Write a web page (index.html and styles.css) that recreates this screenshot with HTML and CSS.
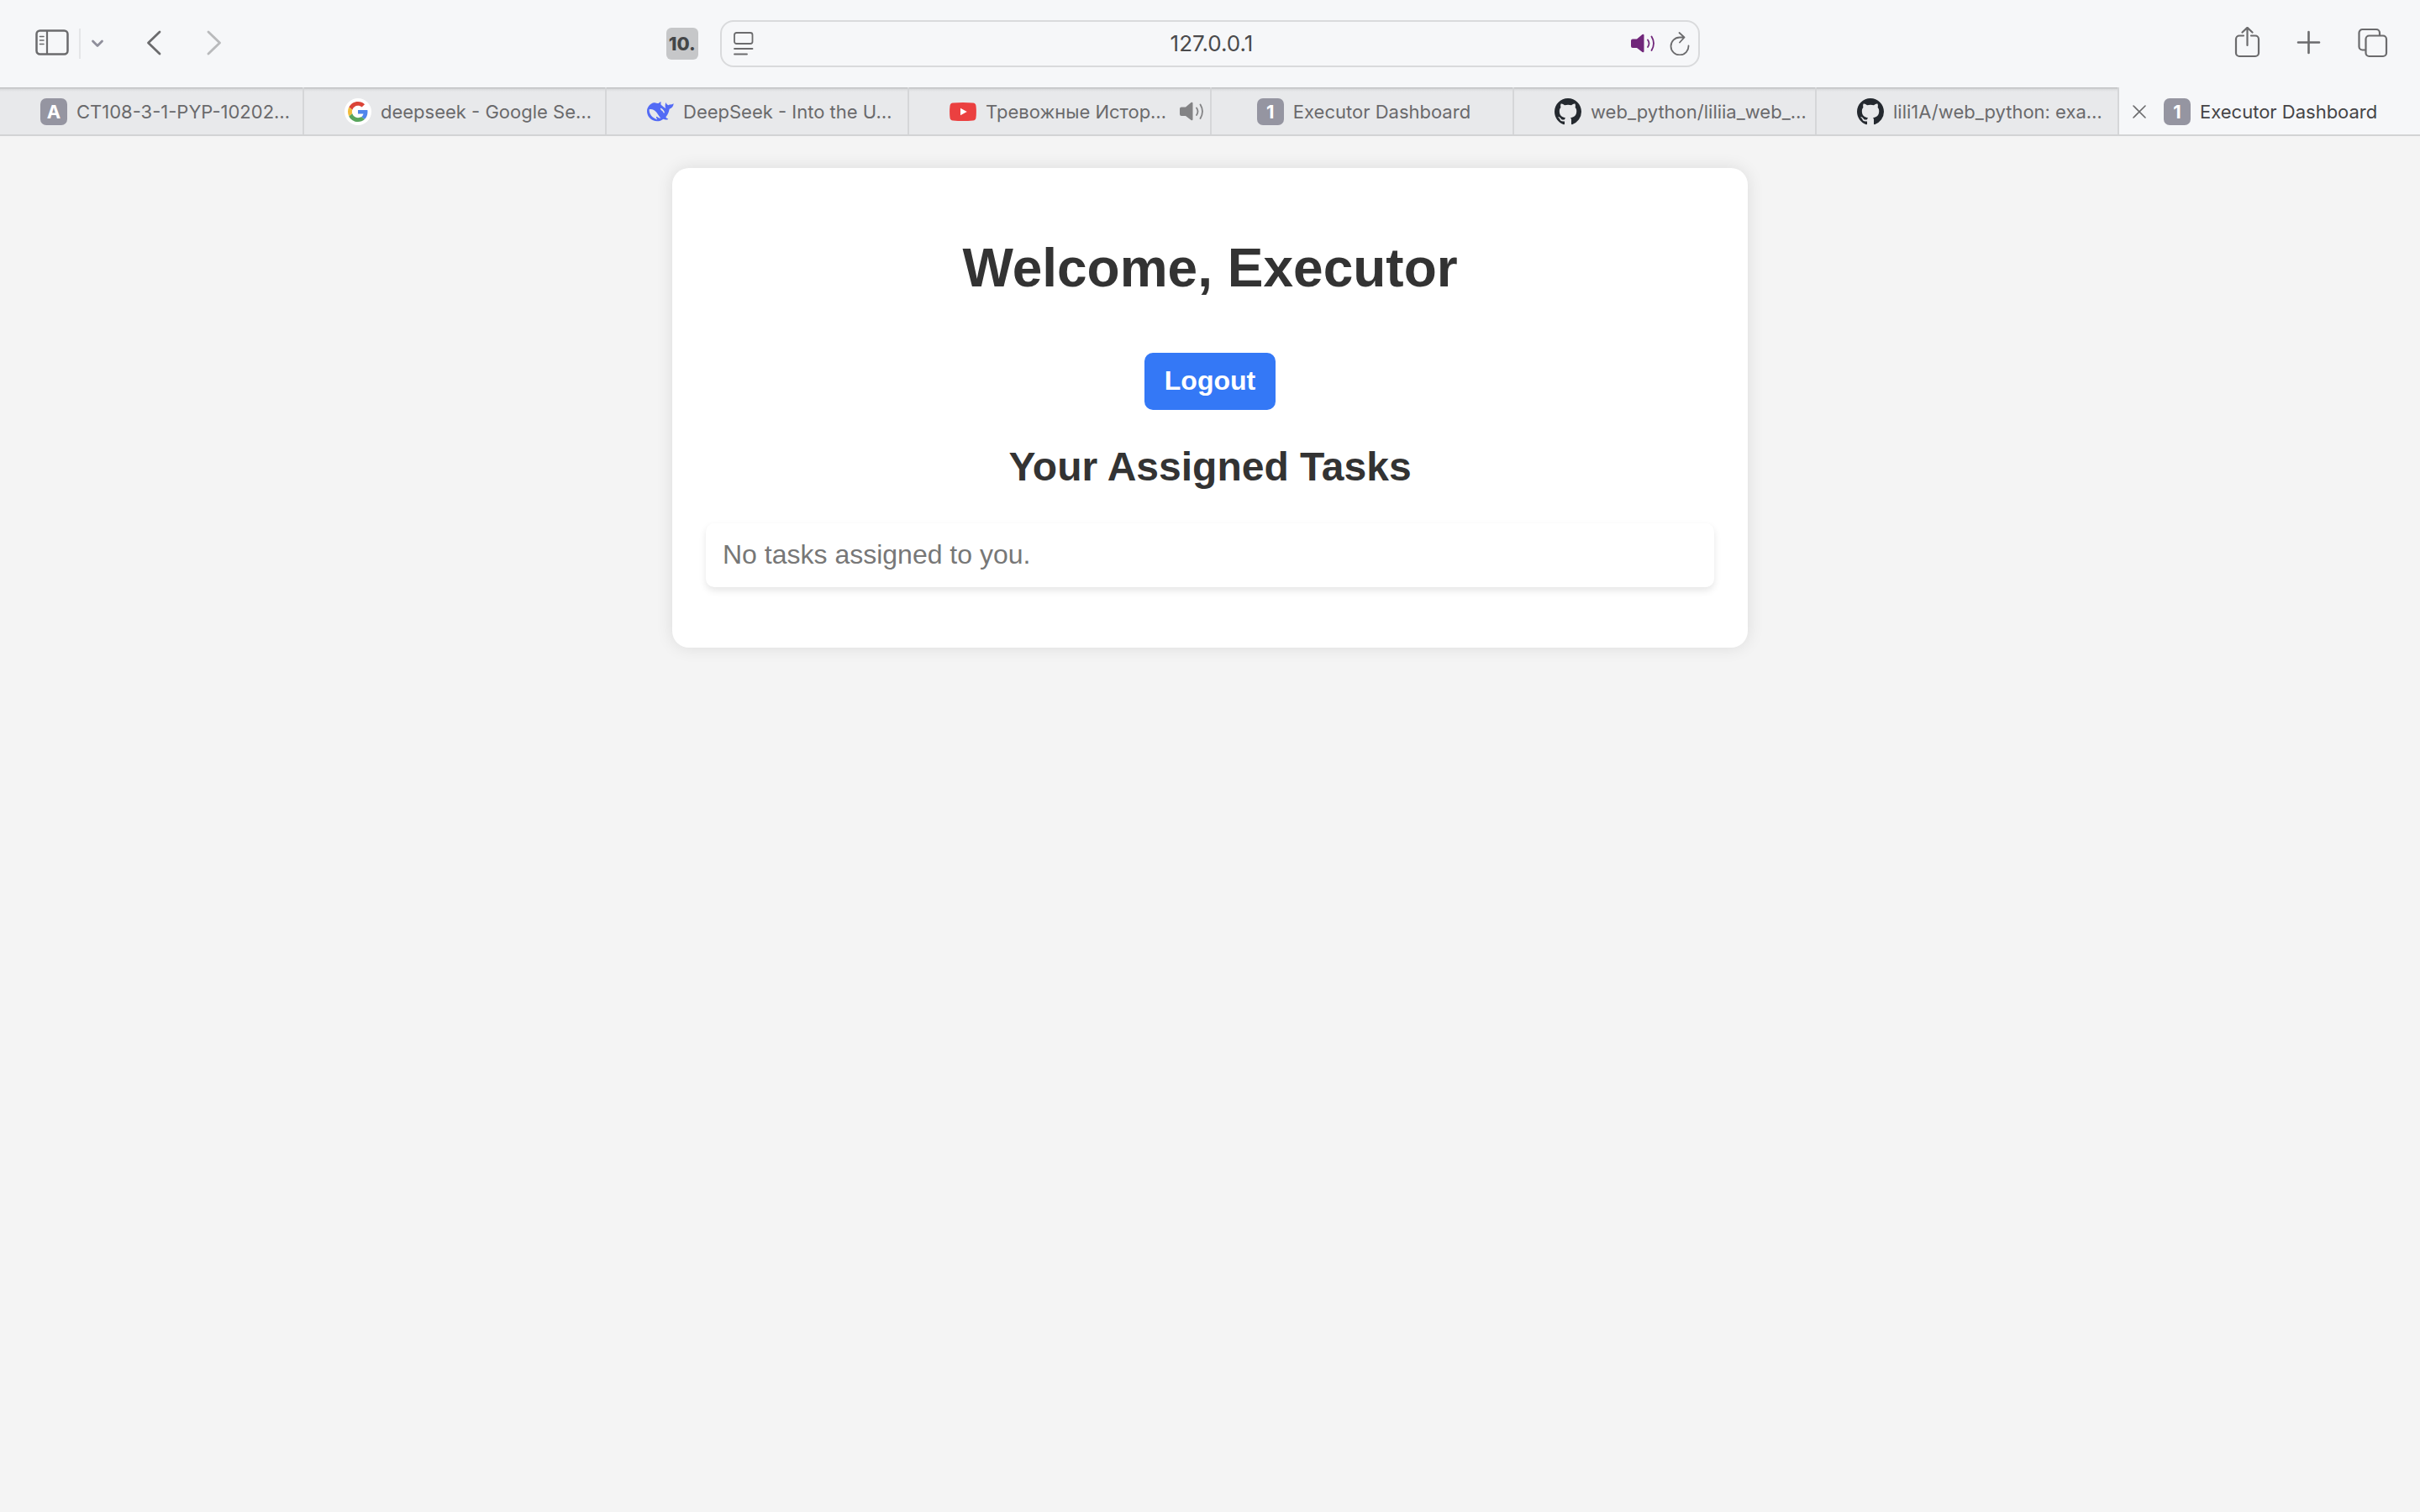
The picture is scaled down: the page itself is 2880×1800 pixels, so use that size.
FILE: index.html
```html
<!DOCTYPE html>
<html lang="en">
<head>
<meta charset="utf-8">
<meta name="viewport" content="width=device-width, initial-scale=1">
<title>Executor Dashboard</title>
<link rel="stylesheet" href="styles.css">
</head>
<body>
<svg class="defs" aria-hidden="true">
  <symbol id="speaker" viewBox="0 0 30 24">
    <path fill="currentColor" d="M2 6.500h5L13.500 1Q15.500 0 15.500 2V21Q15.500 23 13.500 22L7 17H2Q0 17 0 15V8.500Q0 6.500 2 6.500Z"/>
    <path fill="none" stroke="currentColor" stroke-width="1.800" stroke-linecap="round" d="M20 7.500q3 4 0 8.500M24.500 3.500q5 8 0 16.500"/>
  </symbol>
  <symbol id="github" viewBox="0 0 16 16">
    <path fill="#24292f" d="M8 0C3.580 0 0 3.580 0 8c0 3.540 2.290 6.530 5.470 7.590.4.070.55-.17.55-.38 0-.19-.01-.82-.01-1.490-2.010.37-2.530-.49-2.690-.94-.09-.23-.48-.94-.82-1.130-.28-.15-.68-.52-.01-.53.63-.01 1.080.58 1.230.82.72 1.210 1.870.87 2.330.66.07-.52.28-.87.51-1.070-1.780-.2-3.640-.89-3.640-3.950 0-.87.31-1.590.82-2.150-.08-.2-.36-1.020.08-2.120 0 0 .67-.21 2.200.82.64-.18 1.320-.27 2-.27s1.360.09 2 .27c1.530-1.040 2.200-.82 2.200-.82.44 1.100.16 1.920.08 2.120.51.56.82 1.270.82 2.150 0 3.070-1.870 3.750-3.650 3.950.29.25.54.73.54 1.480 0 1.070-.01 1.930-.01 2.200 0 .21.15.46.55.38A8.010 8.010 0 0 0 16 8c0-4.420-3.580-8-8-8Z"/>
  </symbol>
</svg>

<header class="toolbar">
  <div class="tools tools-left">
    <button class="tool" type="button" aria-label="Show sidebar">
      <svg width="40" height="40" viewBox="0 0 40 40"><rect x="1.500" y="4.500" width="37" height="28" rx="4" stroke-width="2.500"/><path stroke-width="2.200" d="M14 5v27"/><path stroke-width="1.600" d="M5.500 11.500h4.500M5.500 16h4.500M5.500 20.500h4.500"/></svg>
    </button>
    <span class="divider"></span>
    <button class="tool tool-muted" type="button" aria-label="Tab groups">
      <svg width="16" height="40" viewBox="0 0 16 40"><path stroke-width="2.800" d="M2.500 17 8 22.500 13.500 17"/></svg>
    </button>
    <nav class="history">
      <button class="tool tool-wide" type="button" aria-label="Back">
        <svg width="40" height="40" viewBox="0 0 40 40"><path stroke-width="2.800" d="M26 6 12.500 19 26 32"/></svg>
      </button>
      <button class="tool tool-wide tool-off" type="button" aria-label="Forward">
        <svg width="40" height="40" viewBox="0 0 40 40"><path stroke-width="2.800" d="M12 6 25.500 19 12 32"/></svg>
      </button>
    </nav>
    <button class="extension" type="button">10.</button>
  </div>
  <div class="address">
    <button class="tool" type="button" aria-label="Page menu">
      <svg width="24" height="28" viewBox="0 0 24 28"><rect x="1" y="1" width="21.500" height="13" rx="2.500" stroke-width="1.800"/><path stroke-width="1.800" d="M1 20h21.500M1 26.500h15"/></svg>
    </button>
    <input class="url" type="text" value="127.0.0.1" aria-label="Address">
    <button class="tool tool-sound" type="button" aria-label="Mute tab"><svg width="30" height="24"><use href="#speaker"/></svg></button>
    <button class="tool" type="button" aria-label="Reload">
      <svg width="24" height="28" viewBox="0 0 24 28"><path stroke-width="1.800" d="M22.500 16.500A10.500 10.500 0 1 1 12 6.500h5.500M11.500 1l6 5.500-5.500 6"/></svg>
    </button>
  </div>
  <div class="tools tools-right">
    <button class="tool tool-wide" type="button" aria-label="Share">
      <svg width="40" height="40" viewBox="0 0 40 40"><path stroke-width="2.200" d="M15 10.500H10a4 4 0 0 0-4 4V31a4 4 0 0 0 4 4H29a4 4 0 0 0 4-4V14.500a4 4 0 0 0-4-4H24M19.500 22V.9M13.500 6.500l6-5.600 6 5.600"/></svg>
    </button>
    <button class="tool tool-wide" type="button" aria-label="New tab">
      <svg width="40" height="40" viewBox="0 0 40 40"><path stroke-width="2.600" d="M6 18.500H31M18.500 6V31"/></svg>
    </button>
    <button class="tool tool-wide" type="button" aria-label="Tab overview">
      <svg width="40" height="40" viewBox="0 0 40 40"><rect x="12.500" y="10.500" width="24.500" height="24.500" rx="4" stroke-width="2.200"/><path stroke-width="2.200" d="M12 27.500H8.500a4 4 0 0 1-4-4V7a4 4 0 0 1 4-4H25a4 4 0 0 1 4 4v3"/></svg>
    </button>
  </div>
</header>

<nav class="tabs" aria-label="Tabs">
  <a class="tab" href="#"><span class="badge">A</span><span class="title">CT108-3-1-PYP-10202…</span></a>
  <a class="tab" href="#">
    <svg class="favicon" viewBox="-8 -8 64 64"><circle cx="24" cy="24" r="32" fill="#fff"/><path fill="#db4437" d="M24 9.500c3.540 0 6.710 1.220 9.210 3.600l6.850-6.850C35.900 2.380 30.470 0 24 0 14.620 0 6.510 5.380 2.560 13.220l7.980 6.190C12.430 13.720 17.740 9.500 24 9.500z"/><path fill="#4f86ec" d="M46.980 24.550c0-1.570-.15-3.090-.38-4.550H24v9.020h12.940c-.58 2.960-2.260 5.480-4.780 7.180l7.730 6c4.510-4.180 7.090-10.360 7.090-17.650z"/><path fill="#f1bb3a" d="M10.530 28.590A14.500 14.500 0 0 1 9.770 24c0-1.600.27-3.140.76-4.590l-7.980-6.190A23.900 23.900 0 0 0 0 24c0 3.880.92 7.540 2.560 10.780l7.970-6.190z"/><path fill="#58a55c" d="M24 48c6.480 0 11.930-2.130 15.890-5.810l-7.730-6c-2.150 1.450-4.920 2.300-8.160 2.300-6.260 0-11.570-4.220-13.470-9.910l-7.980 6.190C6.510 42.620 14.620 48 24 48z"/></svg>
    <span class="title">deepseek - Google Se…</span>
  </a>
  <a class="tab" href="#">
    <svg class="favicon" viewBox="0 0 96 96"><path fill="#536bf5" fill-rule="evenodd" d="M0 46C0 32 10 20 24 16C31 14 35 19 41 18C44 17 45 14 49 13C52 14 47 19 50 23C56 29 62 32 67 36C64 30 64 21 68 14C68 20 72 23 77 25C83 20 88 25 95 18C95 28 89 35 80 38C78 50 74 59 67 67C69 72 74 73 76 74C71 79 63 76 58 74C49 82 34 84 22 79C9 74 0 61 0 46ZM8 40C7 53 15 66 29 73C32 75 35 77 36 74C34 71 31 66 34 65C39 66 43 73 49 71C44 65 40 58 34 50C27 42 17 37 8 40ZM48 35C52 35 60 41 62 48C64 55 59 53 58 50C57 46 53 45 51 42C49 40 47 37 48 35Z"/></svg>
    <span class="title">DeepSeek - Into the U…</span>
  </a>
  <a class="tab" href="#">
    <svg class="favicon" viewBox="0 0 32 32"><path fill="#eb4040" d="M4 5.500Q16 4.500 28 5.500 31 5.800 31.500 9 32.300 16 31.500 23 31 26.200 28 26.500 16 27.500 4 26.500 1 26.200.5 23-.3 16 .5 9 1 5.800 4 5.500Z"/><path fill="#fff" d="M13 11.800v8.400L20.800 16Z"/></svg>
    <span class="title">Тревожные Истор…</span>
    <svg class="playing" width="30" height="24"><use href="#speaker"/></svg>
  </a>
  <a class="tab tab-centered" href="#"><span class="badge">1</span><span class="title">Executor Dashboard</span></a>
  <a class="tab" href="#"><svg class="favicon"><use href="#github"/></svg><span class="title">web_python/liliia_web_…</span></a>
  <a class="tab" href="#"><svg class="favicon"><use href="#github"/></svg><span class="title">lili1A/web_python: exa…</span></a>
  <div class="tab tab-active">
    <button class="tool" type="button" aria-label="Close tab"><svg width="16" height="16" viewBox="0 0 16 16"><path stroke-width="1.600" d="M1 1 15 15M15 1 1 15"/></svg></button>
    <a class="tab-link" href="#"><span class="badge">1</span><span class="title">Executor Dashboard</span></a>
  </div>
</nav>

<main class="card">
  <h1>Welcome, Executor</h1>
  <button class="logout" type="button">Logout</button>
  <h2>Your Assigned Tasks</h2>
  <ul class="tasks">
    <li>No tasks assigned to you.</li>
  </ul>
</main>
</body>
</html>
```
FILE: styles.css
```css
* {
  box-sizing: border-box;
}

body {
  margin: 0;
  min-height: 100vh;
  background: #f4f4f4;
  font-family: "Liberation Sans", Arial, sans-serif;
}

button {
  padding: 0;
  border: 0;
  background: none;
}

svg {
  display: block;
  flex: none;
}

.defs {
  display: none;
}

/* Browser toolbar */
.toolbar {
  display: grid;
  grid-template-columns: 1fr 40.5% 1fr;
  align-items: center;
  height: 104px;
  background: #f6f7f9;
  font-family: Inter, sans-serif;
}

.tools {
  display: flex;
  align-items: center;
}

.tools-left {
  gap: 12px;
  padding: 0 26px 0 42px;
}

.tools-right {
  justify-content: flex-end;
  padding-right: 20px;
}

.tool {
  display: flex;
  justify-content: center;
  flex: none;
  color: #6b6b6d;
}

.tool svg {
  fill: none;
  stroke: currentColor;
  stroke-linecap: round;
  stroke-linejoin: round;
}

.tool-wide {
  width: 74px;
}

.tool-muted {
  color: #8f8f9b;
}

.tool-off {
  color: #b9babc;
}

.tool-sound {
  color: #70267a;
}

.tool-sound svg,
.playing {
  stroke: none;
}

.divider {
  width: 2px;
  height: 36px;
  background: #e4e5e7;
}

.history {
  display: flex;
  margin-left: 12px;
}

.history .tool-wide {
  width: 72px;
}

.extension {
  width: 38px;
  height: 38px;
  margin-left: auto;
  border-radius: 6px;
  background: #c6c7c9;
  color: #444648;
  font: 800 22px/38px Inter, sans-serif;
}

.address {
  display: flex;
  align-items: center;
  gap: 16px;
  height: 56px;
  padding: 0 10px 0 14px;
  border: 2px solid #d9dadc;
  border-radius: 16px;
}

.url {
  flex: 1;
  min-width: 0;
  padding: 0 0 0 46px;
  border: 0;
  background: none;
  color: #4a4a4c;
  font: 26px/32px Inter, sans-serif;
  text-align: center;
}

/* Tab strip */
.tabs {
  display: grid;
  grid-template-columns: repeat(8, 1fr);
  height: 58px;
  border-bottom: 2px solid #d2d3d4;
  background: linear-gradient(#c2c3c5 1px, #d9dadc 2px, #e8e9eb 5px);
  font: 22px/28px Inter, sans-serif;
}

.tab {
  display: flex;
  align-items: center;
  gap: 11px;
  min-width: 0;
  padding: 2px 6px 0 48px;
  border-left: 2px solid #d5d6d8;
  color: #6a6a6c;
  text-decoration: none;
}

.tab:first-child {
  border-left: 0;
}

.tab-centered {
  justify-content: center;
  padding: 2px 0 0 4px;
}

.tab-active {
  gap: 21px;
  padding: 2px 0 0 16px;
  background: #f6f7f9;
}

.tab-link {
  display: flex;
  align-items: center;
  gap: 11px;
  color: #454547;
  text-decoration: none;
}

.title {
  white-space: nowrap;
}

.favicon {
  width: 32px;
  height: 32px;
}

.badge {
  flex: none;
  width: 32px;
  height: 32px;
  border-radius: 7px;
  background: #9595a1;
  color: #fff;
  font-weight: 700;
  line-height: 32px;
  text-align: center;
}

.playing {
  margin-left: auto;
  color: #838385;
}

/* Dashboard */
.card {
  max-width: 1280px;
  margin: 38px auto 40px;
  padding: 40px;
  border-radius: 20px;
  background: #fff;
  box-shadow: 0 0 20px rgba(0, 0, 0, 0.1);
  color: #333;
  font-size: 32px;
  text-align: center;
}

h1 {
  margin: 42px 0 64px;
  font-size: 64px;
  line-height: 74px;
}

h2 {
  margin: 40px 0;
  font-size: 48px;
  line-height: 55px;
}

.logout {
  display: block;
  margin: 0 auto;
  padding: 15px 24px 17px;
  border-radius: 10px;
  background: #3478f6;
  color: #fff;
  font: bold 32px/36px "Liberation Sans", Arial, sans-serif;
}

.tasks {
  margin: 0 0 32px;
  padding: 0;
  list-style: none;
}

.tasks li {
  padding: 19px 20px 21px;
  border-radius: 10px;
  background: #fff;
  box-shadow: 0 4px 8px rgba(0, 0, 0, 0.1);
  color: #777;
  line-height: 36px;
  text-align: left;
}
```
